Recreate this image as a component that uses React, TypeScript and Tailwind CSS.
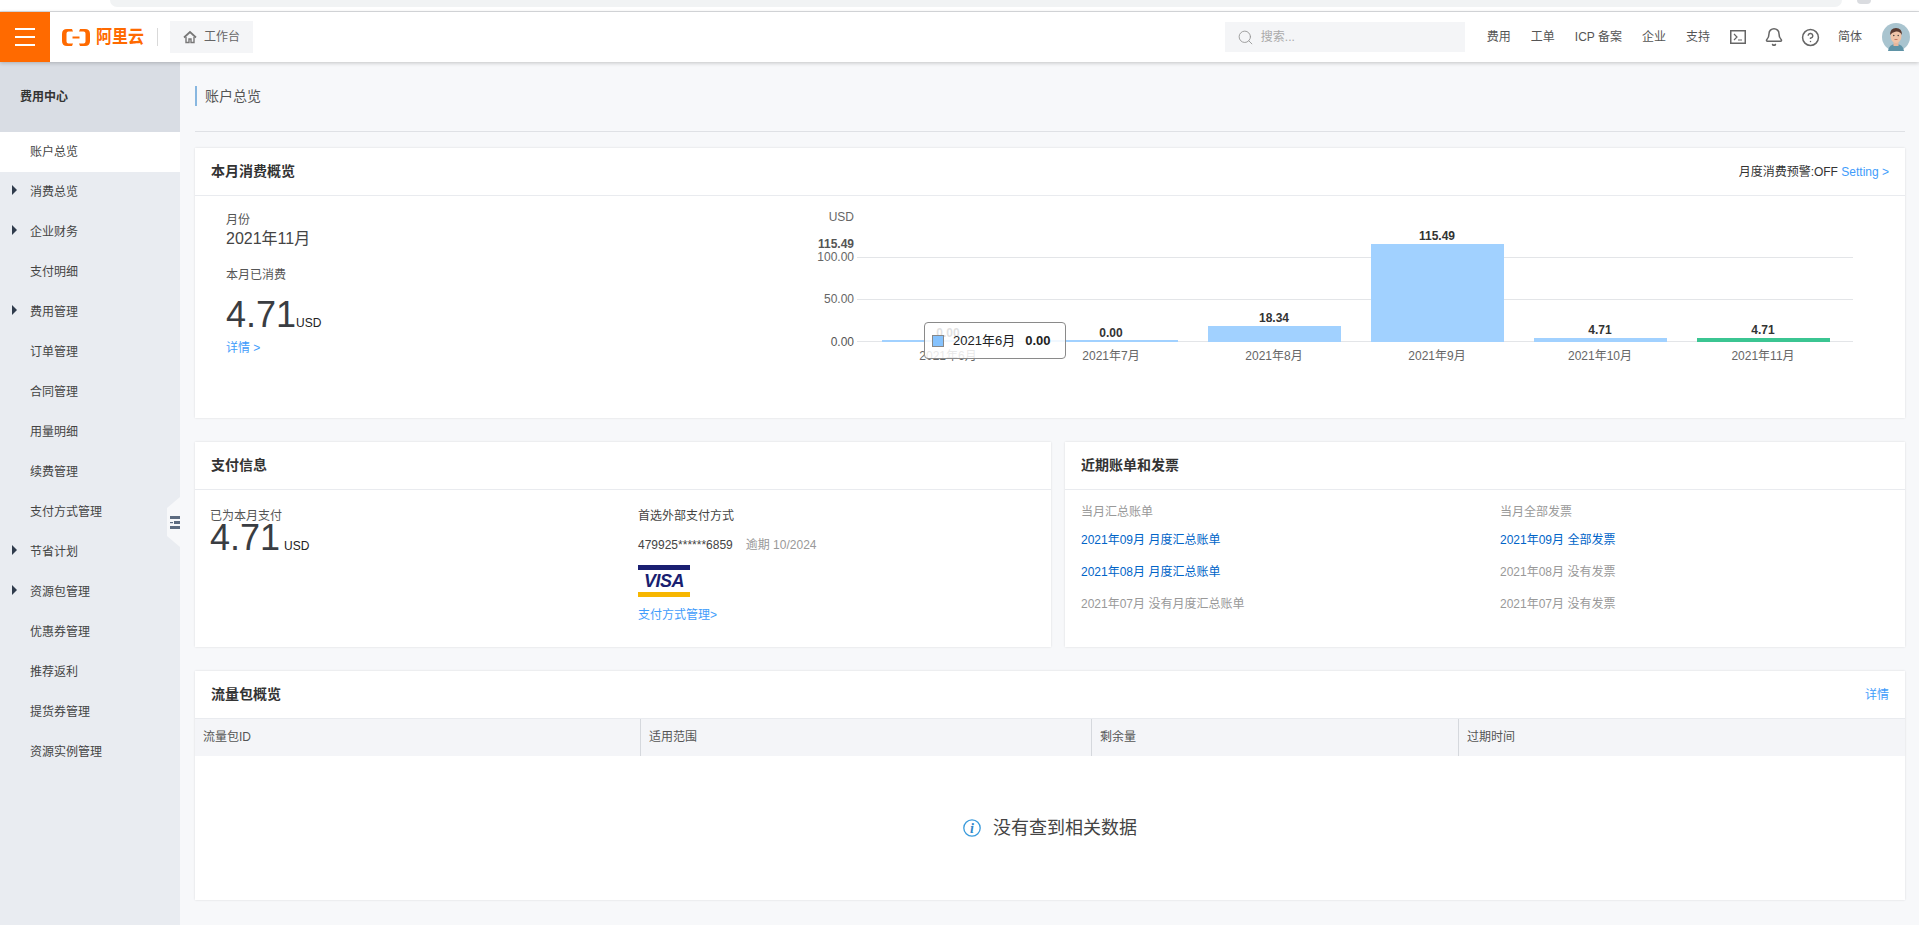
import React from "react";
import { Search, Bell, CircleHelp } from "lucide-react";

const FONT = "font-['Liberation_Sans','Noto_Sans_CJK_SC',sans-serif]";

const sideItems: [string, boolean][] = [
  ["消费总览", true],
  ["企业财务", true],
  ["支付明细", false],
  ["费用管理", true],
  ["订单管理", false],
  ["合同管理", false],
  ["用量明细", false],
  ["续费管理", false],
  ["支付方式管理", false],
  ["节省计划", true],
  ["资源包管理", true],
  ["优惠券管理", false],
  ["推荐返利", false],
  ["提货券管理", false],
  ["资源实例管理", false],
];

function Card({ title, right, className, children }: { title: string; right?: React.ReactNode; className: string; children: React.ReactNode }) {
  return (
    <section className={`bg-white shadow-[0_0_2px_rgba(0,0,0,0.12)] flex flex-col ${className}`}>
      <div className="h-[48px] shrink-0 border-b border-[#e9ebef] flex items-center justify-between pl-4 pr-4">
        <h2 className="text-[14px] font-bold text-[#333]">{title}</h2>
        {right}
      </div>
      {children}
    </section>
  );
}

function Chart() {
  const bars = [
    { x: 882, y: 340, h: 2, v: "0.00", vy: 333, l: "2021年6月", c: "#a1d1ff" },
    { x: 1045, y: 340, h: 2, v: "0.00", vy: 333, l: "2021年7月", c: "#a1d1ff" },
    { x: 1208, y: 326, h: 16, v: "18.34", vy: 318, l: "2021年8月", c: "#a1d1ff" },
    { x: 1371, y: 244, h: 98, v: "115.49", vy: 236, l: "2021年9月", c: "#a1d1ff" },
    { x: 1534, y: 338, h: 4, v: "4.71", vy: 330, l: "2021年10月", c: "#a1d1ff" },
    { x: 1697, y: 338, h: 4, v: "4.71", vy: 330, l: "2021年11月", c: "#3bc592" },
  ];
  const ox = 810;
  const oy = 196;
  return (
    <svg width={1060} height={184} viewBox={`${ox} ${oy} 1060 184`} className="block" style={{ fontFamily: "'Liberation Sans','Noto Sans CJK SC',sans-serif" }}>
      <text x={854} y={221} textAnchor="end" fontSize={12} fill="#666">USD</text>
      <text x={854} y={248} textAnchor="end" fontSize={12} fontWeight={700} fill="#555">115.49</text>
      <text x={854} y={261} textAnchor="end" fontSize={12} fill="#666">100.00</text>
      <text x={854} y={303} textAnchor="end" fontSize={12} fill="#666">50.00</text>
      <text x={854} y={346} textAnchor="end" fontSize={12} fill="#555">0.00</text>
      {[257, 299, 341].map((y) => (
        <line key={y} x1={857} x2={1853} y1={y + 0.5} y2={y + 0.5} stroke="#e3e5e8" />
      ))}
      {bars.map((b) => (
        <g key={b.l}>
          <rect x={b.x} y={b.y} width={133} height={b.h} fill={b.c} />
          <text x={b.x + 66} y={b.vy + 4} textAnchor="middle" fontSize={12} fontWeight={700} fill="#333">{b.v}</text>
          <text x={b.x + 66} y={360} textAnchor="middle" fontSize={12} fill="#666">{b.l}</text>
        </g>
      ))}
    </svg>
  );
}

export default function App() {
  return (
    <div className={`${FONT} relative w-[1919px] h-[925px] overflow-hidden bg-[#f7f8fa] text-[12px] text-[#333] flex flex-col`}>
      {/* browser sliver */}
      <div className="h-[12px] shrink-0 bg-white border-b border-[#dcdee1] flex items-start pl-[110px]">
        <div className="w-[1732px] h-[7px] bg-[#f1f3f4] rounded-b-[8px]" />
        <div className="ml-[15px] w-[14px] h-[4px] bg-[#dadce0] rounded-b-full" />
      </div>

      {/* top bar */}
      <header className="relative z-10 h-[50px] shrink-0 bg-white shadow-[0_1px_4px_rgba(0,0,0,0.22)] flex items-center">
        <div className="w-[50px] h-[50px] bg-[#ff6a00] flex flex-col items-center justify-center gap-[6px]">
          <span className="block w-[20px] h-[2px] bg-white" />
          <span className="block w-[20px] h-[2px] bg-white" />
          <span className="block w-[20px] h-[2px] bg-white" />
        </div>
        <div className="ml-[12px] flex items-center gap-[6px]">
          <svg width="28" height="17" viewBox="0 0 28 17" fill="#ff6a00">
            <path d="M10 0H5Q0 0 0 5V12Q0 17 5 17H10L11 14.5H6.5Q4.5 14.5 4.5 12.5V4.5Q4.5 2.5 6.5 2.5H11Z" />
            <path d="M18 0H23Q28 0 28 5V12Q28 17 23 17H18L17 14.5H21.5Q23.5 14.5 23.5 12.5V4.5Q23.5 2.5 21.5 2.5H17Z" />
            <rect x="10.5" y="7.5" width="7" height="2" />
          </svg>
          <span className="text-[16px] leading-[18px] font-bold text-[#ff6a00] w-[49px] scale-y-[1.15]">阿里云</span>
        </div>
        <div className="ml-[12px] w-px h-[18px] bg-[#d9d9d9]" />
        <div className="ml-[12px] w-[83px] h-[32px] bg-[#f4f5f7] flex items-center pl-[13px] gap-[7px] text-[#666]">
          <svg width="14" height="14" viewBox="0 0 14 14" fill="none" stroke="#777">
            <path d="M1 7.5L7 2L13 7.5" strokeWidth="1.7" />
            <path d="M3 7V12.5H6V9H8V12.5H11V7" strokeWidth="1.4" />
          </svg>
          <span>工作台</span>
        </div>
        <div className="ml-auto flex items-center text-[#555]">
          <div className="w-[240px] h-[30px] bg-[#f4f5f7] flex items-center pl-[12px] gap-[7px] text-[#aaa] mr-[22px]">
            <Search size={17} strokeWidth={1.3} color="#999" />
            <span>搜索...</span>
          </div>
          <span className="mr-[20px]">费用</span>
          <span className="mr-[20px]">工单</span>
          <span className="mr-[20px]">ICP 备案</span>
          <span className="mr-[20px]">企业</span>
          <span className="mr-[20px]">支持</span>
          <svg width="16" height="14" viewBox="0 0 16 14" fill="none" className="mr-[18px]">
            <rect x="0.75" y="0.75" width="14.5" height="12.5" stroke="#666" strokeWidth="1.5" />
            <path d="M4 4L7 7L4 10M8 10H12" stroke="#666" strokeWidth="1.2" />
          </svg>
          <Bell size={20} strokeWidth={1.8} color="#666" className="mr-[17px]" />
          <CircleHelp size={19} strokeWidth={1.9} color="#666" className="mr-[18px]" />
          <span className="mr-[20px]">简体</span>
          <svg width="28" height="28" viewBox="0 0 28 28" className="mr-[9px]">
            <circle cx="14" cy="14" r="14" fill="#a9c4cf" />
            <path d="M6 28Q7 21 14 21T22 28Z" fill="#5f93a6" />
            <rect x="11.5" y="17" width="5" height="6" fill="#e8b79c" />
            <ellipse cx="14" cy="13" rx="5.5" ry="7" fill="#f0c4a8" />
            <path d="M8 12Q8 5 14 5T20 12Q18 8 14 8.5T8 12Z" fill="#5a3a30" />
            <circle cx="11.8" cy="12.5" r="0.7" fill="#333" />
            <circle cx="16.2" cy="12.5" r="0.7" fill="#333" />
            <path d="M12.5 16.5H15.5" stroke="#b5654f" strokeWidth="0.8" />
          </svg>
        </div>
      </header>

      <div className="flex-1 flex min-h-0">
        {/* sidebar */}
        <aside className="relative w-[180px] shrink-0 bg-[#e9ecf1]">
          <div className="h-[70px] bg-[#d9dde4] flex items-center pl-[20px] font-bold text-[#333]">费用中心</div>
          <div className="h-[40px] bg-white flex items-center pl-[30px] text-[#444]">账户总览</div>
          {sideItems.map(([t, arrow]) => (
            <div key={t} className="relative h-[40px] flex items-center pl-[30px] text-[#444]">
              {arrow && <span className="absolute left-[12px] top-[13px] w-0 h-0 border-y-[5px] border-y-transparent border-l-[5px] border-l-[#2f3b4c]" />}
              {t}
            </div>
          ))}
          <div className="absolute right-0 top-[435px] w-[13px] h-[50px] bg-[#f7f8fa] [clip-path:polygon(100%_0,100%_100%,0_78%,0_22%)] flex items-center justify-end">
            <svg width="10" height="13" viewBox="0 0 10 13">
              <rect x="0" y="0" width="10" height="3" fill="#5c6b80" />
              <rect x="4" y="5" width="6" height="3" fill="#5c6b80" />
              <rect x="0" y="6" width="3" height="1.2" fill="#5c6b80" />
              <rect x="0" y="10" width="10" height="3" fill="#5c6b80" />
            </svg>
          </div>
        </aside>

        {/* main */}
        <main className="flex-1 min-w-0 pl-[15px] pr-[14px]">
          <div className="h-[70px] border-b border-[#dfe1e5] pt-[24px]">
            <div className="h-[20px] border-l-2 border-[#88b7e0] pl-[8px] flex items-center text-[#555] text-[14px]">账户总览</div>
          </div>

          <Card
            title="本月消费概览"
            className="mt-[16px] h-[270px]"
            right={
              <span className="text-[#333]">
                月度消费预警:OFF <span className="text-[#3f9cfb]">Setting &gt;</span>
              </span>
            }
          >
            <div className="flex flex-1 min-h-0">
              <div className="w-[615px] shrink-0 pl-[31px] pt-[16px]">
                <div className="leading-[16px] text-[#555]">月份</div>
                <div className="text-[16px] leading-[22px] text-[#444]">2021年11月</div>
                <div className="leading-[16px] text-[#555] mt-[17px]">本月已消费</div>
                <div className="flex items-baseline mt-[12px] leading-[40px]">
                  <span className="text-[36px] text-[#3a3d42]">4.71</span>
                  <span className="leading-none text-[#222]">USD</span>
                </div>
                <div className="text-[#3f9cfb] mt-[5px] leading-[16px]">详情 &gt;</div>
              </div>
              <Chart />
            </div>
          </Card>

          <div className="mt-[24px] flex gap-[14px] h-[205px]">
            <Card title="支付信息" className="w-[856px] shrink-0">
              <div className="flex flex-1">
                <div className="w-[428px] pl-[15px] pt-[18px]">
                  <div className="leading-[16px] text-[#555]">已为本月支付</div>
                  <div className="flex items-baseline leading-[30px] -mt-[1px]">
                    <span className="text-[36px] text-[#3a3d42]">4.71</span>
                    <span className="ml-[4px] leading-none text-[#222]">USD</span>
                  </div>
                </div>
                <div className="pt-[18px] pl-[15px]">
                  <div className="leading-[16px] text-[#444]">首选外部支付方式</div>
                  <div className="mt-[13px] leading-[16px] text-[#444]">
                    479925******6859<span className="ml-[13px] text-[#999]">逾期 10/2024</span>
                  </div>
                  <div className="mt-[12px] w-[52px] h-[32px] flex flex-col justify-between">
                    <div className="h-[5px] bg-[#1a1f71]" />
                    <div className="text-[#1a1f71] text-[18px] leading-[16px] font-bold italic text-center tracking-[-0.5px]">VISA</div>
                    <div className="h-[5px] bg-[#f7b600]" />
                  </div>
                  <div className="mt-[10px] text-[#3f9cfb] leading-[16px]">支付方式管理&gt;</div>
                </div>
              </div>
            </Card>
            <Card title="近期账单和发票" className="flex-1 min-w-0">
              <div className="grid grid-cols-[419px_1fr] pl-[16px] pt-[14px] gap-y-[16px] leading-[16px] text-[#999]">
                <div className="-mb-[4px]">当月汇总账单</div>
                <div className="-mb-[4px]">当月全部发票</div>
                <div className="text-[#0064c8]">2021年09月 月度汇总账单</div>
                <div className="text-[#0064c8]">2021年09月 全部发票</div>
                <div className="text-[#0064c8]">2021年08月 月度汇总账单</div>
                <div>2021年08月 没有发票</div>
                <div>2021年07月 没有月度汇总账单</div>
                <div>2021年07月 没有发票</div>
              </div>
            </Card>
          </div>

          <Card
            title="流量包概览"
            className="mt-[24px] h-[229px]"
            right={<span className="text-[#3f9cfb]">详情</span>}
          >
            <div className="grid grid-cols-[446px_451px_367px_1fr] h-[37px] shrink-0 bg-[#f4f5f8] text-[#555] items-stretch">
              {["流量包ID", "适用范围", "剩余量", "过期时间"].map((t, i) => (
                <div key={t} className={`flex items-center pl-[8px] pb-[1px] ${i < 3 ? "border-r border-[#d5d8dd]" : ""}`}>{t}</div>
              ))}
            </div>
            <div className="flex-1 flex items-center justify-center gap-[12px] text-[18px] text-[#444]">
              <svg width="18" height="18" viewBox="0 0 18 18" fill="none">
                <circle cx="9" cy="9" r="8.2" stroke="#3a9bdc" strokeWidth="1.3" />
                <text x="9" y="14" textAnchor="middle" fontSize="14" fontWeight="700" fontStyle="italic" fontFamily="'Liberation Serif',serif" fill="#2f86c9">i</text>
              </svg>
              <span>没有查到相关数据</span>
            </div>
          </Card>
        </main>
      </div>

      {/* chart tooltip */}
      <div className="absolute left-[924px] top-[322px] w-[142px] h-[37px] bg-white/85 border border-[#8a8a8a] rounded-[4px] flex items-center pl-[7px] gap-[9px] text-[13px] text-[#222]">
        <span className="w-[12px] h-[12px] bg-[#85c2fd] border border-[#888]" />
        <span>2021年6月</span>
        <span className="font-bold ml-[1px]">0.00</span>
      </div>
    </div>
  );
}
